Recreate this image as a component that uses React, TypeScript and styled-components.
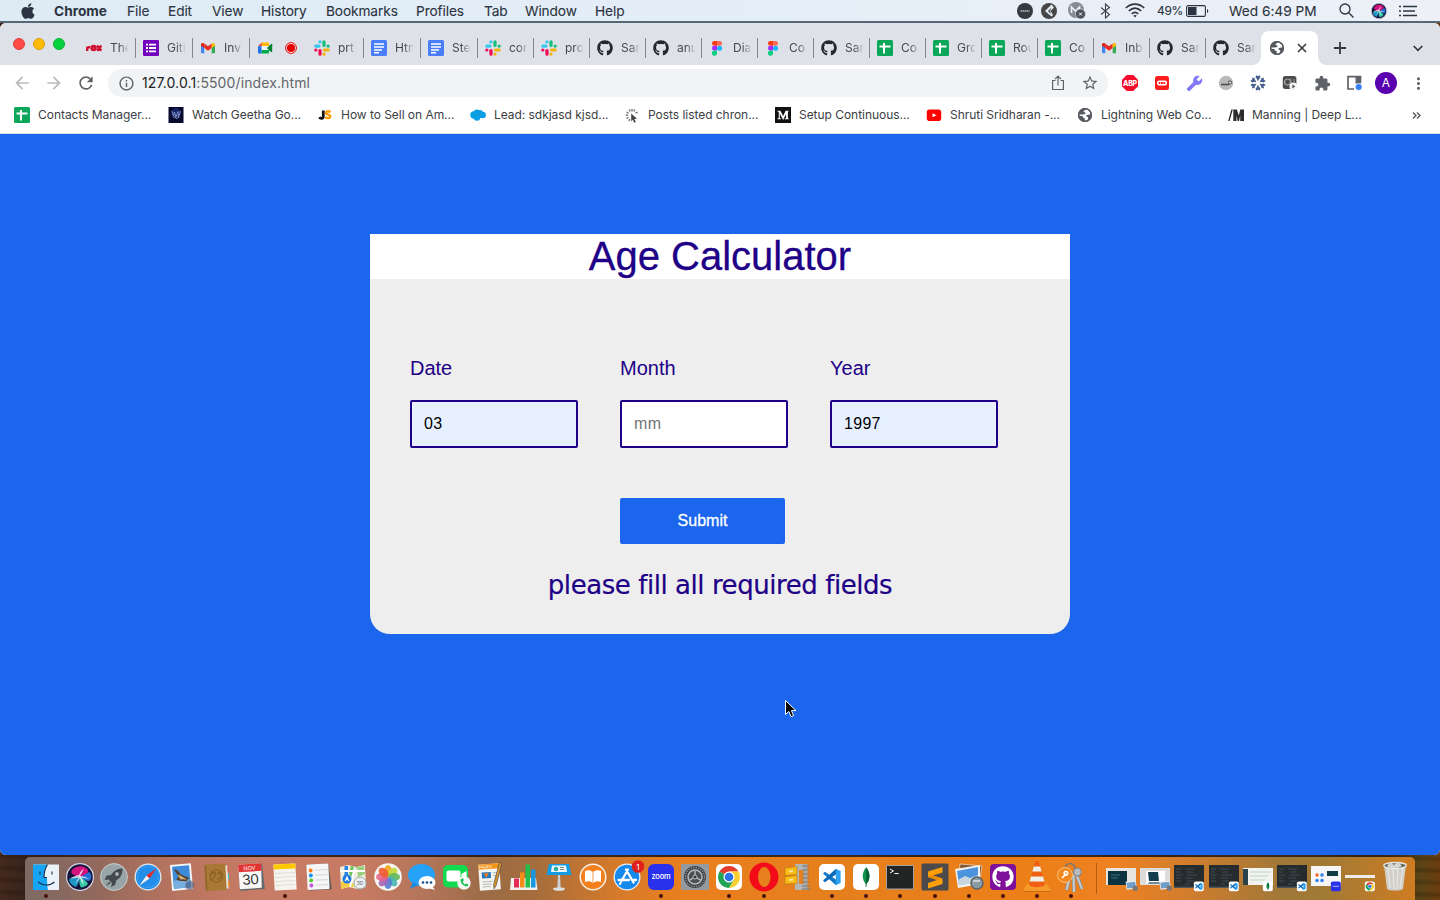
import React from "react";
import styled, { createGlobalStyle } from "styled-components";
import { FaApple, FaGithub } from "react-icons/fa";
import {
  MdArrowBack, MdArrowForward, MdBuild, MdExtension, MdInfoOutline,
  MdMoreVert, MdRefresh, MdStarBorder,
} from "react-icons/md";

const Global = createGlobalStyle`
  *, *::before, *::after { box-sizing: border-box; }
  body { margin: 0; background: #3a261b; overflow: hidden; }
`;

const ui = `Inter, "Liberation Sans", sans-serif`;
const indigo = "#200086";

const Desktop = styled.div`
  width: 1440px;
  height: 900px;
  display: flex;
  flex-direction: column;
  overflow: hidden;
  font-family: ${ui};
  background:
    repeating-linear-gradient(3deg, transparent 0 5px, rgba(0,0,0,.16) 7px 9px, transparent 12px),
    linear-gradient(90deg, #45291c 0, #38241c 25px, #3a2a18 1380px, #5a4417 1420px, #6d3d10 1440px);
`;

const MenuBar = styled.header`
  height: 23px;
  flex: none;
  display: flex;
  align-items: center;
  padding-left: 19px;
  padding-right: 18px;
  background: linear-gradient(90deg, #deebf5, #e4eef8 50%, #edf0f7);
  border-bottom: 2px solid #566878;
  color: #2b3440;
`;

const MenuText = styled.span<{ w: number; ls?: number; bold?: boolean; gap?: number; size?: number }>`
  width: ${(p) => p.w}px;
  margin-left: ${(p) => p.gap ?? 18}px;
  font-size: ${(p) => p.size ?? 13.7}px;
  line-height: 20px;
  font-weight: ${(p) => (p.bold ? 700 : 400)};
  letter-spacing: ${(p) => p.ls ?? -0.1}px;
  -webkit-text-stroke: ${(p) => (p.bold ? 0 : 0.1)}px;
  white-space: nowrap;
  flex: none;
`;

const Spring = styled.div`flex: 1;`;

const Slot = styled.span<{ w: number; color?: string }>`
  width: ${(p) => p.w}px;
  flex: none;
  display: flex;
  align-items: center;
  justify-content: center;
  color: ${(p) => p.color ?? "inherit"};
  svg { display: block; flex: none; }
`;

const BrowserWindow = styled.main`
  height: 832px;
  flex: none;
  display: flex;
  flex-direction: column;
  overflow: hidden;
  border-radius: 6px;
  background: #fff;
`;

const TabStrip = styled.div`
  height: 42px;
  flex: none;
  display: flex;
  align-items: flex-end;
  background: #dee1e8;
`;

const Lights = styled.div`
  width: 78px;
  height: 42px;
  padding: 15px 0 0 13px;
  display: flex;
  gap: 8px;
`;

const Light = styled.i<{ c: string; edge: string }>`
  width: 12px;
  height: 12px;
  border-radius: 50%;
  background: ${(p) => p.c};
  border: 0.5px solid ${(p) => p.edge};
`;

const Tab = styled.div<{ w: number; first: boolean; line: boolean }>`
  width: ${(p) => p.w}px;
  height: 34px;
  flex: none;
  display: flex;
  align-items: center;
  padding-left: ${(p) => (p.first ? 8 : 7)}px;
  gap: 8px;
  svg { display: block; flex: none; }
  &::after {
    content: "";
    width: 1px;
    height: 20px;
    margin-left: auto;
    background: ${(p) => (p.line ? "#83878d" : "transparent")};
  }
`;

const TabTitle = styled.span`
  width: 18px;
  margin-right: -9px;
  overflow: hidden;
  white-space: nowrap;
  font-size: 12px;
  line-height: 16px;
  color: #45494d;
  mask-image: linear-gradient(90deg, #000 50%, transparent 105%);
`;

const ActiveTab = styled.div`
  width: 57px;
  height: 34px;
  flex: none;
  display: flex;
  align-items: center;
  padding-left: 8px;
  gap: 11px;
  position: relative;
  border-radius: 8px 8px 0 0;
  background: #fff;
  color: #55595e;
  &::before, &::after {
    content: "";
    position: absolute;
    bottom: 0;
    width: 8px;
    height: 8px;
  }
  &::before { left: -8px; background: radial-gradient(circle at 0 0, transparent 7.5px, #fff 8px); }
  &::after { right: -8px; background: radial-gradient(circle at 100% 0, transparent 7.5px, #fff 8px); }
`;

const Toolbar = styled.div`
  height: 36px;
  flex: none;
  display: flex;
  align-items: center;
  padding-left: 6px;
  color: #5f6368;
`;

const AddressBar = styled.div`
  width: 1000px;
  height: 28px;
  margin-left: 6px;
  margin-right: 6px;
  border-radius: 14px;
  background: #f1f3f4;
  display: flex;
  align-items: center;
  padding-left: 2px;
  padding-right: 2px;
`;

const Url = styled.span`
  padding-bottom: 1px;
  font-size: 14px;
  letter-spacing: 0.11px;
  color: #63676c;
  white-space: nowrap;
  b { font-weight: 400; color: #202124; }
`;

const Avatar = styled.span`
  width: 22px;
  height: 22px;
  border-radius: 50%;
  background: #5b00ae;
  color: #fff;
  font-size: 12px;
  line-height: 22px;
  text-align: center;
`;

const Bookmarks = styled.nav`
  height: 33px;
  flex: none;
  display: flex;
  align-items: center;
  padding: 0 8px 4px 14px;
  border-bottom: 1px solid #dadce0;
`;

const Bookmark = styled.span<{ w: number }>`
  width: ${(p) => p.w}px;
  flex: none;
  display: flex;
  align-items: center;
  gap: 8px;
  font-size: 12px;
  line-height: 28px;
  letter-spacing: -0.04px;
  color: #3c4043;
  white-space: nowrap;
  svg { display: block; flex: none; }
`;

const Page = styled.section`
  flex: 1;
  padding-top: 100px;
  background: #1b66ec;
  font-family: "Liberation Sans", Arial, sans-serif;
`;

const Card = styled.div`
  width: 700px;
  height: 400px;
  margin: 0 auto;
  border-radius: 0 0 20px 20px;
  background: #eeeeee;
  color: ${indigo};
  display: flex;
  flex-direction: column;
`;

const Title = styled.h1`
  margin: 0;
  height: 45px;
  flex: none;
  background: #fff;
  font-size: 40px;
  font-weight: 400;
  line-height: 45px;
  text-align: center;
  -webkit-text-stroke: 0.3px ${indigo};
`;

const Fields = styled.div`
  display: grid;
  grid-template-columns: repeat(3, 168px);
  column-gap: 42px;
  padding: 77px 40px 0;
`;

const Field = styled.label`
  display: flex;
  flex-direction: column;
  gap: 20px;
  font-size: 20px;
  line-height: 24px;
`;

const Input = styled.input<{ $filled?: boolean }>`
  width: 168px;
  height: 48px;
  margin: 0;
  padding: 0 12px;
  border: 2px solid ${indigo};
  border-radius: 2px;
  outline: none;
  background: ${(p) => (p.$filled ? "#e6f0ff" : "#fff")};
  color: #000;
  font: 16px "Liberation Sans", Arial, sans-serif;
  letter-spacing: 0.3px;
  &::placeholder { color: #757575; }
`;

const Submit = styled.button`
  width: 165px;
  height: 46px;
  margin: 50px 0 0 250px;
  padding: 0;
  border: 0;
  border-radius: 2px;
  background: #1b66ec;
  color: #fff;
  font: 16px "Liberation Sans", Arial, sans-serif;
  -webkit-text-stroke: 0.3px #fff;
`;

const Message = styled.p`
  margin: 25px 0 0;
  font: 26px/32px "DejaVu Sans", Verdana, sans-serif;
  letter-spacing: -0.44px;
  text-align: center;
  white-space: nowrap;
  -webkit-text-stroke: 0.2px ${indigo};
`;

const Cursor = styled.svg`
  position: absolute;
  left: 784px;
  top: 699px;
`;

const DockArea = styled.footer`
  height: 45px;
  flex: none;
  padding: 2px 25px 0;
`;

const Dock = styled.div`
  height: 43px;
  display: flex;
  padding-left: 3.6px;
  border-radius: 5px 5px 0 0;
  background: linear-gradient(90deg, #7e6a63 0, #91695d 70px, #b4735f 140px, #c87b66 230px, #c87b63 330px,
    #b3755a 400px, #9b6c46 460px, #a56d3c 510px, #d57a2b 590px, #ea7f1d 660px, #e57f1e 820px, #ed7f17 1000px,
    #ee8122 1090px, #d27d2d 1160px, #9f7838 1260px, #a17a34 1300px, #cf7c22 1390px);
`;

const DockCell = styled.div<{ $on?: boolean }>`
  width: 34.2px;
  height: 43px;
  flex: none;
  padding-top: 6px;
  display: flex;
  flex-direction: column;
  align-items: center;
  svg { display: block; flex: none; overflow: visible; }
  &::after {
    content: "";
    width: 4px;
    height: 4px;
    margin-top: 3px;
    border-radius: 50%;
    background: ${(p) => (p.$on ? "#46120a" : "transparent")};
  }
`;

const DockDivider = styled.i`
  width: 1px;
  height: 31px;
  margin: 6px 7px 0 7.5px;
  background: #b85c10;
`;

/* ---------- small site icons, drawn on a 16 unit grid ---------- */

const Svg = ({ s = 16, v = 16, children }: { s?: number; v?: number; children: React.ReactNode }) => (
  <svg width={s} height={s} viewBox={`0 0 ${v} ${v}`} fill="none">{children}</svg>
);

const Rox = () => (
  <Svg><g stroke="#cf1030" strokeWidth="2.4"><path d="M1.2 11V6.8M1.5 7.2H4.2M11 5.6l4.4 5M15.4 5.6l-4.4 5" /><circle cx="7.6" cy="8" r="1.8" strokeWidth="2.8" /></g></Svg>
);
const Forms = () => (
  <Svg><rect width="16" height="16" rx="1.2" fill="#7200bd" /><path d="M3 4.700h2M6 4.700h7M3 8h2M6 8h7M3 11.300h2M6 11.300h7" stroke="#fff" strokeWidth="1.800" /></Svg>
);
const Gmail = () => (
  <Svg><path d="M1 5v7.500c0 .500.300.800.800.800H4.300V7z" fill="#4285f4" /><path d="M15 5v7.500c0 .500-.300.800-.800.800h-2.500V7z" fill="#34a853" /><path d="M4.300 3.500L8 6.300l3.700-2.800V8L8 10.800 4.300 8z" fill="#ea2c22" /><path d="M11.700 3.500c1.500-1.200 3.300-.500 3.300 1v1.200L11.700 8z" fill="#fbbc04" /><path d="M4.300 3.500C2.800 2.300 1 3 1 4.500v1.200L4.300 8z" fill="#d9231b" /></Svg>
);
const Meet = () => (
  <Svg><path d="M4.700 2.500H11c.600 0 1 .400 1 1V6H4.700z" fill="#ffba00" /><path d="M4.700 2.500V6.200H1z" fill="#ea4335" /><path d="M1 6.200h3.700v7.300H2a1 1 0 0 1-1-1z" fill="#1a73e8" /><path d="M4.700 10H12v2.500a1 1 0 0 1-1 1H4.700z" fill="#00ac47" /><path d="M12 5.800l2.300-1.900c.400-.300.900 0 .900.400v7.400c0 .500-.500.700-.900.400L12 10.200 9.700 8z" fill="#00832d" /><path d="M4.700 6H12l-2.500 2.200L12 10H4.700z" fill="#f0f4fa" /></Svg>
);
const Slack = () => (
  <Svg><g strokeLinecap="round" strokeWidth="3.200"><path d="M1.800 6.100H5M6 1.800v.100" stroke="#36c5f0" /><path d="M10 1.800V5.500M14.200 6.100h-.100" stroke="#16bf7c" /><path d="M14.200 10H10.500M10 14.200v-.100" stroke="#f5b20c" /><path d="M6 14.200V10.500M1.800 10h.100" stroke="#ee0b54" /></g></Svg>
);
const Docs = () => (
  <Svg><rect width="16" height="16" rx="1.500" fill="#4a7df8" /><path d="M3 4h10M3 7h10M3 10h8M3 12.800h5" stroke="#fff" strokeWidth="1.500" /></Svg>
);
const Sheet = () => (
  <Svg><rect width="16" height="16" rx="1.500" fill="#0aa65a" /><path d="M2.500 6.500h11M7 3v10.500" stroke="#fff" strokeWidth="2" /></Svg>
);
const Figma = () => (
  <Svg><path d="M8 1H5.400a2.400 2.400 0 0 0 0 4.800H8z" fill="#fb3b12" /><path d="M8 1h2.700a2.400 2.400 0 0 1 0 4.800H8z" fill="#ff6b5a" /><path d="M8 5.800H5.400a2.400 2.400 0 0 0 0 4.800H8z" fill="#a32cff" /><circle cx="10.600" cy="8.200" r="2.500" fill="#0fb4ff" /><path d="M5.400 10.600H8v2.500a2.550 2.550 0 1 1-2.600-2.500z" fill="#0acf83" /></Svg>
);
const Globe = () => (
  <Svg><circle cx="8" cy="8" r="7" fill="#55595e" /><path d="M9.500 2.200c-.500.800-3 .800-3 2.400 0 1 2 .600 2 1.600 0 1.200-1.800 1-2.700 1.200H2.300L2.200 8.700l3 .300c.900.500.500 1.700 1.600 1.900l.900.200v2.500c2.600.100 3.700-1.600 3.500-2.900-.200-1-2.100-1.100-1.800-2.200.400-1.200 2.600-1 4-1.100.200-2-1.400-4.300-3.900-5.200z" fill="#fff" /><circle cx="8" cy="8" r="6.400" stroke="#55595e" strokeWidth="1.300" /></Svg>
);
const Record = () => (
  <Svg s={12} v={12}><circle cx="6" cy="6" r="5.400" fill="#fff" stroke="#e00000" strokeWidth="1" /><circle cx="6" cy="6" r="4.100" fill="#e80000" /></Svg>
);
const Geetha = () => (
  <Svg><rect x=".500" width="15" height="16" fill="#070a2c" /><circle cx="8" cy="6" r="5" fill="#2743a8" opacity=".45" /><path d="M4 4l1.500 5 1-4 1.500 5 2-5.500 .500 6L12.500 4M5 11l2-1.500 1.500 2.500 2-2" stroke="#93a2d8" strokeWidth=".8" /></Svg>
);
const Js = () => (
  <Svg><path d="M6.300 3.500v6.300c0 2-3 2-4 .500" stroke="#111" strokeWidth="2.700" /><path d="M13.500 5C11 3.500 8.700 4.500 9 6.200c.200 1.800 4.400 1 4.300 3.200-.100 2-3 2.300-5.100.900" stroke="#ff9900" strokeWidth="2.400" /></Svg>
);
const Salesforce = () => (
  <Svg><g fill="#0b9ee2"><circle cx="4" cy="8" r="3.700" /><circle cx="7" cy="5.600" r="3.200" /><circle cx="10" cy="6" r="3" /><circle cx="12.700" cy="8" r="3.200" /><circle cx="7" cy="10.500" r="3.200" /><path d="M4 6h9v5H4z" /></g></Svg>
);
const Posts = () => (
  <Svg><path d="M8 2v2.500M10.800 2.500l-.900 2M13.500 5l-2 1.200M5.200 2.500l.900 2M2.500 5l2 1.200M1.700 8.200h2.500M2.600 11.500l1.900-1.300M5 14l.700-2" stroke="#666" strokeWidth="1.300" /><path d="M7.200 6.500l5.800 5.300-2.700.100 1.600 3-1.500.800-1.600-3L7.200 14.500z" fill="#444" /></Svg>
);
const Medium = () => (
  <Svg><rect width="16" height="16" fill="#111" /><path d="M2.500 4.200h3M10.600 4.200h3M4.300 4.500v7M2.500 11.800h3.200M12 4.500v7M9.800 11.800h3.800" stroke="#fff" strokeWidth="1.100" /><path d="M4.800 4.500L8.100 11l3.200-6.500M12 4.500v7" stroke="#fff" strokeWidth="1.700" /></Svg>
);
const YouTube = () => (
  <Svg><rect x=".800" y="2.500" width="14.400" height="11.500" rx="2.800" fill="#f00" /><path d="M6.500 6.200l4 2-4 2z" fill="#fff" /></Svg>
);
const Manning = () => (
  <Svg><path d="M3.300 2.500h1.500L1.600 14H.200zM5.300 2.500h3.600l1.900 6 1.500-6H16V14h-3.800V8.500L11 14H9.700L8.500 8.500V14H5.300z" fill="#2c2c2c" /></Svg>
);
const Siri = ({ s = 16 }: { s?: number }) => (
  <Svg s={s} v={28}>
    <circle cx="14" cy="14" r="13.400" fill="#15123c" stroke="#d4d6e4" strokeWidth="1.200" />
    <path d="M14 14C5 12 4 9 6.500 6.500 11 2 19 2 22 7c1 3-3 5-8 7z" fill="#d4157f" />
    <path d="M14 14c4-1 8-5 9.500-5 3 4 2 8-.500 9-3 0-6-2-9-4z" fill="#2474d8" />
    <path d="M14 14C9 15 4 14 3 17c1 4 4 6 7 7 2-2 3-6 4-10z" fill="#1d96c4" />
    <path d="M14 14c-1 4-1 8 1 10.500 4-.500 6-2 7-4-2-3-5-5-8-6.500z" fill="#35c9a8" />
    <path d="M14 12.500c2-2 3-5 3.500-7-2 2-3.500 4-4.500 6.500-3 .500-7 2-9 3.500 4-.500 7-.800 9-1L9 21c2-2 4-4 5-6l3.500 7c0-3-.700-5-2-7.500l8 1.500c-3-1.500-6-2.700-8.500-3z" fill="#fff" opacity=".8" />
  </Svg>
);

const Code = () => (
  <><path d="M4.500 7L2 9.200l16.500 15 1.500.300V18z" fill="#1177c8" /><path d="M4.500 21L2 18.800l16.500-15L20 3.500V10z" fill="#0a69ba" /><path d="M19 3l6.500 3v16L19 25z" fill="#2ba0f0" /></>
);
const Leaf = () => (
  <><path d="M14 3c5.500 7 4.500 14 0 19C9.500 17 8.500 10 14 3z" fill="#13924c" /><path d="M14 3c5.500 7 4.500 14 0 19z" fill="#076234" /><path d="M14 19v6" stroke="#0a6b37" /></>
);
const ChromeMark = () => (
  <><path d="M14 14L4.500 8.500A11 11 0 0 1 23.500 8.500H14z" fill="#e33b2e" /><path d="M14 14L4.500 8.500A11 11 0 0 0 14 25l5-8z" fill="#23a455" /><path d="M14 8.500h9.500A11 11 0 0 1 14 25l5-8z" fill="#fdd02f" /><circle cx="14" cy="14" r="5.500" fill="#fff" /><circle cx="14" cy="14" r="4.300" fill="#2b73e8" /></>
);

/* ---------- dock artwork, drawn on a 28 unit grid ---------- */

const Tile = ({ fill }: { fill: string }) => <rect x="1" y="1" width="26" height="26" rx="5" fill={fill} />;

const dockApps: { on?: boolean; art: React.ReactNode }[] = [
  { on: true, art: <><path d="M1 1.500h26V27H1z" fill="#eaf1f8" /><path d="M1 1.500h14.500c-3 5-3.500 9-3.500 13H15c0 5 .300 9 1 12.500H1z" fill="#16a5f5" /><path d="M8 8.500v3M20 8.500v3M6 19c5 4 12 4 16.500 0M15.500 1.500c-3 5-3.500 9-3.500 13H15" stroke="#183046" strokeWidth="1.100" /></> },
  { art: <Siri s={28} /> },
  { art: <><circle cx="14" cy="14" r="13.400" fill="#99a4a6" stroke="#c8ced0" /><path d="M22.500 5.500c-6 0-9 3-11.500 6.500l-4.500.800L4.500 17l4-.500 3.500 3.500-1 4 4-2 1.500-5c4-2 6-6 6-11.500z" fill="#42484b" /><circle cx="17" cy="11" r="1.900" fill="#aab1b3" /><path d="M5.500 23l4-4.500 1.200 1.500z" fill="#42484b" /></> },
  { art: <><circle cx="14" cy="14" r="13.500" fill="#e3e7ea" /><circle cx="14" cy="14" r="12.200" fill="#238ee9" /><circle cx="14" cy="14" r="10.500" stroke="#7cc0f3" strokeWidth=".8" strokeDasharray=".8 1.500" /><path d="M22.500 5.500L15.500 15.500 12.500 12.500z" fill="#ed2725" /><path d="M5.500 22.500L12.500 12.500l3 3z" fill="#f4f4f4" /></> },
  { art: <g transform="rotate(-5 14 14)"><path d="M3 1h21v26H3z" fill="#f1f3f4" /><path d="M5 3h17v22H5z" fill="#3d8bd8" /><path d="M5 17h17v8H5z" fill="#78aede" /><path d="M6.500 5.500c4 1 5.500 4 6.500 6l8 4-3 3-7-1-3-2 3-2z" fill="#5a3c24" /><path d="M10 11l9 6-7-1z" fill="#d5b47a" /><circle cx="21" cy="23" r="4.500" fill="#37466c" stroke="#778" opacity=".55" /></g> },
  { art: <g transform="rotate(-3 14 14)"><path d="M22 3h3v23h-3z" fill="#e6e6df" /><path d="M25 4h1v6h-1z" fill="#e54" /><path d="M25 11h1v6h-1z" fill="#3cc" /><path d="M25 19h1v5h-1z" fill="#f90" /><rect x="2" y="1" width="21" height="26.500" rx="1.500" fill="#a87835" /><path d="M3 2v25" stroke="#8d6425" strokeWidth="1.500" /><circle cx="13.500" cy="13" r="6.300" stroke="#8a5f26" /><path d="M9.500 16.500c.500-2 3-2 3-5.500 0-3-3.500-2-3 .500M14.500 16.500c2.500-1 3.500-2 3.500-5 0-3-3.500-2-3 .500" stroke="#8a5f26" strokeWidth="1.200" /></g> },
  { art: <g transform="rotate(-4 14 14)"><path d="M2 1h24l1 26H2z" fill="#656969" /><path d="M2 1h23l-1 24.500H2z" fill="#f8f8f8" /><path d="M2 1h23v7.500H2z" fill="#e33434" /><text x="13" y="7" fontSize="5.500" fill="#fff" textAnchor="middle" fontFamily="Inter">NOV</text><text x="13.200" y="21.500" fontSize="14" fill="#333" textAnchor="middle" fontFamily="Inter" letterSpacing="-.6">30</text></g> },
  { on: true, art: <g transform="rotate(-3 14 14)"><path d="M3 1h22v26H3z" fill="#f6f5ed" /><path d="M3 1h22v5H3z" fill="#ffc900" /><path d="M4 10h20M4 14h20M4 18h20M4 22h20" stroke="#deded9" /></g> },
  { art: <g transform="rotate(-3 14 14)"><path d="M3 1h21l2 26H4z" fill="#555" /><rect x="2" y="1" width="22" height="25.500" rx="1" fill="#f6f6f6" /><circle cx="6" cy="7" r="2" fill="#ff7b17" /><circle cx="6" cy="12" r="2" fill="#1492ef" /><circle cx="6" cy="17" r="2" fill="#52c936" /><circle cx="6" cy="22" r="2" fill="#c651dd" /><path d="M10 7h13M10 12h13M10 17h13M10 22h13" stroke="#c9c9c9" strokeWidth=".7" /></g> },
  { art: <><path d="M1 4l8-2 8 2 9-2 1 22-9 2-8-2-8 2z" fill="#f1eedc" /><path d="M12 3l6 1-6 10-2-4z" fill="#6cc25b" /><path d="M18 4l7-1 1 8-7 3z" fill="#9bd17c" /><path d="M2 19l8-4 6 9-6 0-8 2z" fill="#f5cb46" /><path d="M5.500 3h3.500v12H5.500z" fill="#2385e6" /><path d="M1 8h25M16 4l-5 20" stroke="#fff" strokeWidth="2" /><circle cx="8" cy="16" r="4.500" fill="#2079df" /><path d="M8 12.500l2.500 6L8 17l-2.500 1.500z" fill="#fff" /><circle cx="21" cy="20" r="6" fill="#eceff0" stroke="#9aa" /><text x="21" y="22" fontSize="5" textAnchor="middle" fontFamily="Inter" fill="#667">3D</text></> },
  { art: <><circle cx="14" cy="14" r="13.800" fill="#f5f5f1" />{["#f7a31c", "#c7d63b", "#62b75a", "#48b5b5", "#577bd3", "#a765b8", "#e46687", "#ee5b31"].map((c, i) => <ellipse key={c} cx="14" cy="7.800" rx="3.900" ry="5.800" fill={c} opacity=".9" transform={`rotate(${i * 45} 14 14)`} />)}</> },
  { art: <><ellipse cx="13.500" cy="12" rx="13.500" ry="11" fill="#25a2f7" /><path d="M5 19l-3 7 8-4z" fill="#168be4" /><ellipse cx="19" cy="19.500" rx="8.500" ry="6.500" fill="#fff" /><path d="M24 23l3 4-7-2z" fill="#fff" /><g fill="#12508c"><circle cx="15" cy="19.500" r="1.300" /><circle cx="19" cy="19.500" r="1.300" /><circle cx="23" cy="19.500" r="1.300" /></g></> },
  { art: <><rect x="1" y="2" width="25" height="22.500" rx="5" fill="#12da51" /><rect x="4.500" y="7.500" width="14" height="11" rx="2" fill="#fff" /><path d="M19.500 11l5-3v9l-5-3z" fill="#fff" /><circle cx="22" cy="20" r="6.700" fill="#f6f7f4" /><path d="M18.500 16.500c0 4 3 7 7 7l1-2-2.500-1-1.200 1c-1-1-2-2-2-3l1-1-.800-2.500z" fill="#19c553" /></> },
  { art: <g transform="rotate(-4 14 14)"><path d="M3 1h21v26H3z" fill="#f4f4f2" /><path d="M3 1h21v5H3z" fill="#f49418" /><text x="10" y="5" fontSize="4" fill="#fff" textAnchor="middle" fontFamily="Inter">PAGES</text><path d="M6 9h9v6H6z" fill="#2878b8" /><path d="M8 10h5l-2.500 4.500z" fill="#f37b21" /><path d="M17 10h4M17 13h4M6 18.500h10M6 21h9M6 23.500h8" stroke="#aaa" strokeWidth=".8" /><path d="M24.500 0l2.500 1-7.500 22-2.200 3-.300-4z" fill="#d5932d" stroke="#424242" strokeWidth=".6" /></g> },
  { art: <><path d="M1 15h25l1.500 12H0z" fill="#f0f0ef" /><path d="M4 15.500h5v9H4z" fill="#e62a56" /><path d="M10 9.500h4.500v15H10z" fill="#f48e19" /><path d="M15.500 1.500h4.500v23h-4.500z" fill="#24bf4b" /><path d="M21 6.500h4.500v18H21z" fill="#1997dd" /></> },
  { art: <><path d="M4 1h20l2.500 11h-25z" fill="#139ce2" /><path d="M7 2.500h14l1 6.500H6z" fill="#eef5f7" /><circle cx="11" cy="6" r="2.300" fill="#29ad9d" /><path d="M15 4.500h4M15 6.500h4" stroke="#888" /><path d="M13 12h2l.700 14h-3.400z" fill="#cdd1d3" /><ellipse cx="14" cy="26" rx="6" ry="1.800" fill="#dce1e4" /></> },
  { art: <><circle cx="14" cy="14" r="13.500" fill="#f7f0e5" /><circle cx="14" cy="14" r="12" fill="#f4801d" /><path d="M14 9c-3-2-5-2-8-1v11c3-1 5-1 8 1 3-2 5-2 8-1V8c-3-1-5-1-8 1z" fill="#fff" /><path d="M14 9v11" stroke="#f39a4c" /></> },
  { art: <><circle cx="14" cy="14" r="13.500" fill="#e8eef5" /><circle cx="14" cy="14" r="12.200" fill="#1689ed" /><path d="M15 6.500L8.500 18M13 6.500L20.500 19.500M5.500 17h10.500M19.500 17h3.500M7.500 20l-.500.800" stroke="#fff" strokeWidth="2.300" strokeLinecap="round" /><circle cx="25" cy="3.500" r="6.300" fill="#df201b" /><text x="25" y="6.500" fontSize="8" fill="#fff" textAnchor="middle" fontFamily="Inter">1</text></> },
  { on: true, art: <><rect x="1" y="1" width="26" height="26" rx="6" fill="#2931ec" /><text x="14" y="16" fontSize="7.500" fontWeight="500" fill="#fff" textAnchor="middle" fontFamily="Inter" letterSpacing="-.2">zoom</text></> },
  { art: <><rect y="1" width="28" height="26" rx="1" fill="#939b9f" /><circle cx="14" cy="14" r="11" fill="#3a3d40" /><circle cx="14" cy="14" r="9.500" stroke="#85898c" strokeWidth="1.500" strokeDasharray="1.500 1" /><circle cx="14" cy="14" r="7" fill="#4b4f52" stroke="#b9bcbe" strokeWidth="1.500" /><path d="M14 14V7.500M14 14l-5.500 3.200M14 14l5.500 3.200" stroke="#b9bcbe" strokeWidth="1.400" /><circle cx="14" cy="14" r="2" fill="#33373a" stroke="#b9bcbe" /></> },
  { on: true, art: <><Tile fill="#fff" /><ChromeMark /></> },
  { on: true, art: <path d="M14-.500C6-.500-.500 6-.500 14S6 28.500 14 28.500 28.500 22 28.500 14 22-.500 14-.500zM14.300 4c3.400 0 6.200 4.500 6.200 10s-2.800 10-6.200 10S8.100 19.500 8.100 14 10.900 4 14.300 4z" fillRule="evenodd" fill="#f20b18" /> },
  { art: <><path d="M11 1h9v6h-5v14h5v6h-9z" fill="#b3b6b6" /><path d="M19.500 1h4v26h-4z" fill="#a7aaa9" /><path d="M18 3h7M18 7h7M18 11h7M18 15h7M18 19h7M18 23h8M18 26h9" stroke="#7b7d7b" strokeWidth="1.200" /><path d="M1 5l12-1.500v8L1 12.500zM1 13.500l12-1v8L1 21z" fill="#f8bd16" stroke="#bd7b12" strokeWidth=".7" /><path d="M5 7.500l4-.500v2l-4 .500zM5 16l4-.500v2l-4 .500z" fill="#f8e499" /></> },
  { on: true, art: <><Tile fill="#fff" /><g transform="translate(3.500 3.500) scale(.75)"><Code /></g></> },
  { on: true, art: <><Tile fill="#fff" /><g transform="translate(1.500 1.500) scale(.9)"><Leaf /></g></> },
  { on: true, art: <><rect y="2" width="28" height="24.500" rx="1" fill="#a3a3a3" /><path d="M1 3h26v22.500H1z" fill="#232525" /><path d="M4 6l3.500 2L4 10M8.500 10.500h4" stroke="#fff" /></> },
  { on: true, art: <><rect x=".500" y=".500" width="27" height="27" rx="1.500" fill="#4a4a4a" /><path d="M21.500 4v5.500L12 12.500l9.500 3V21L7 25.500V20l9-3-9-3V8.500z" fill="#ff9d0a" /><path d="M7 14l9 3 5.500-1.500-9.500-3z" fill="#e98a08" /></> },
  { on: true, art: <><path d="M5 1l22 2-3 20-21-2z" fill="#85542e" stroke="#e8e3d8" strokeWidth=".7" /><path d="M0 6l25-4v19L3 25z" fill="#f2f2f0" /><path d="M2 8l21-4v15L4 22z" fill="#4b94dd" /><path d="M3 17l7-4 5 2 8-3v8L4 22z" fill="#c8d6e0" /><circle cx="22" cy="20" r="6" fill="#8c9aa3" stroke="#5a646a" strokeWidth="1.500" /><path d="M18 18h7" stroke="#dfe6ea" strokeWidth="1.500" /></> },
  { on: true, art: <><rect x="1" y="1" width="26" height="26" rx="4" fill="#7e109a" /><g transform="translate(3 3)"><FaGithub size={22} color="#fff" /></g></> },
  { on: true, art: <><path d="M4 21h20l4 7H0z" fill="#f79a2c" /><path d="M0 28h28v1H0z" fill="#c96d12" /><path d="M12.300-2h3.400L22 22c-4 3-12 3-16 0z" fill="#ef5f14" /><path d="M10.800 3.500h6.400l1.400 5H9.400zM8 13.500h12l1.400 5H6.600z" fill="#efeee9" /></> },
  { on: true, art: <><circle cx="13" cy="5.500" r="5" stroke="#777" strokeWidth="1.500" /><path d="M12 17l-2.500 10M16.500 12l.500 17M20 13l5 13" stroke="#8b8f90" strokeWidth="3.600" /><path d="M12 17l-2.500 10M16.500 12l.500 17M20 13l5 13" stroke="#c9cccd" strokeWidth="2" /><circle cx="20.500" cy="9" r="4" fill="#b9bcbd" stroke="#7c8081" /><circle cx="8" cy="12" r="7.500" fill="#f08a20" stroke="#f8c27e" /><path d="M5 15l4-4M9 8.500a1.800 1.800 0 1 1-.100 0" stroke="#fff" strokeWidth="1.600" /></> },
];

type Mini = "preview" | "code" | "leaf" | "zoom" | "chrome";
const MiniBadge = ({ kind }: { kind: Mini }) => (
  <g transform="translate(19.500 15) scale(.38)">
    {kind === "preview" ? <g transform="rotate(-7)"><path d="M0 2h27v21H0z" fill="#eee" /><path d="M2 5h23v15H2z" fill="#6f9fc9" /><circle cx="23" cy="22" r="7" fill="#777" /></g>
      : <Tile fill={kind === "zoom" ? "#2931ec" : "#fff"} />}
    {kind === "code" && <g transform="translate(2 2) scale(.86)"><Code /></g>}
    {kind === "leaf" && <Leaf />}
    {kind === "chrome" && <ChromeMark />}
    {kind === "zoom" && <path d="M6 14h16" stroke="#9faaff" strokeWidth="3" />}
  </g>
);

const DarkEditor = () => (
  <><path d="M0-1h30v22.500H0z" fill="#262b2e" /><path d="M2 3h5M2 6h4M2 9h6M2 12h4M2 15h5M11 3h9M13 6h6M13 9h10M11 12h8M13 15h7M11 18h5" stroke="#526168" strokeWidth=".6" /><path d="M0 21h30" stroke="#35566a" /></>
);

const thumbs: { kind: Mini; art: React.ReactNode }[] = [
  { kind: "preview", art: <><path d="M0 2h30v17H0z" fill="#e8e5e1" /><path d="M2 5h19v14H2z" fill="#0d3340" /><path d="M5 9h9M5 12h7" stroke="#367078" /></> },
  { kind: "preview", art: <><path d="M0 2h30v17H0z" fill="#dedcd8" /><path d="M6 5h19v13H6z" fill="#fff" /><path d="M8 6h10l1 9H9z" fill="#153f50" /><path d="M9 16h10l2 2H8z" fill="#738b92" /></> },
  { kind: "code", art: <DarkEditor /> },
  { kind: "code", art: <DarkEditor /> },
  { kind: "leaf", art: <><path d="M0 2h30v17H0z" fill="#f2f3f0" /><path d="M0 3h5v16H0z" fill="#29434d" /><path d="M7 6h21M7 10h18M7 14h15" stroke="#b9d5c4" /></> },
  { kind: "code", art: <DarkEditor /> },
  { kind: "zoom", art: <><path d="M0 0h30v20H0z" fill="#f6f6f6" /><path d="M16 5h11v5H16z" fill="#113c43" /><circle cx="6" cy="9" r="1.800" fill="#f26b32" /><circle cx="11" cy="9" r="1.800" fill="#3584ed" /><circle cx="6" cy="14.500" r="1.800" fill="#3584ed" /><circle cx="11" cy="14.500" r="1.800" fill="#3584ed" /></> },
  { kind: "chrome", art: <path d="M0 9h30v3H0z" fill="#eeece8" /> },
];

const hub = <FaGithub size={16} color="#24292e" />;
const tabs: [React.ReactNode, React.ReactNode, number][] = [
  [<Rox />, "The", 58], [<Forms />, "GitH", 57], [<Gmail />, "Invit", 57], [<Meet />, <Record />, 57], [<Slack />, "prt", 57],
  [<Docs />, "Htm", 57], [<Docs />, "Step", 57], [<Slack />, "com", 56], [<Slack />, "proj", 56], [hub, "San", 56], [hub, "anu", 56],
  [<Figma />, "Dia", 56], [<Figma />, "Co", 56], [hub, "San", 56], [<Sheet />, "Co", 56], [<Sheet />, "Gro", 56], [<Sheet />, "Rou", 56],
  [<Sheet />, "Co", 56], [<Gmail />, "Inb", 56], [hub, "San", 56], [hub, "San", 55],
];

const bookmarks: [React.ReactNode, string, number][] = [
  [<Sheet />, "Contacts Manager...", 154], [<Geetha />, "Watch Geetha Go...", 149],
  [<Js />, "How to Sell on Am...", 153], [<Salesforce />, "Lead: sdkjasd kjsd...", 154],
  [<Posts />, "Posts listed chron...", 151], [<Medium />, "Setup Continuous...", 151],
  [<YouTube />, "Shruti Sridharan -...", 151], [<Globe />, "Lightning Web Co...", 151],
  [<Manning />, "Manning | Deep L...", 151],
];

const menus: [string, number][] = [
  ["File", 23], ["Edit", 26], ["View", 31], ["History", 47], ["Bookmarks", 72], ["Profiles", 50], ["Tab", 23], ["Window", 52], ["Help", 30],
];

export default function App() {
  return (
    <>
      <Global />
      <Desktop>
        <MenuBar>
          <Slot w={17}><FaApple size={18} /></Slot>
          <MenuText w={55} bold ls={0}>Chrome</MenuText>
          {menus.map(([t, w]) => <MenuText key={t} w={w}>{t}</MenuText>)}
          <Spring />
          <Slot w={24}><Svg><circle cx="8" cy="8" r="8" fill="#343a40" /><path d="M3.500 8h9" stroke="#aeb6bd" strokeWidth="1.400" strokeDasharray="1.700 .400" /></Svg></Slot>
          <Slot w={24}><Svg><circle cx="8" cy="8" r="8" fill="#47474a" /><path d="M10.500 1.500L4 8l6.500 5.500 1.500-1.500-2.500-4L13 4.500z" fill="#e8eff6" /><path d="M10.500 4.500L7 8l3 3-1-3z" fill="#47474a" /></Svg></Slot>
          <Slot w={30}><Svg s={19} v={19}><circle cx="9" cy="9" r="8" fill="#858b91" /><path d="M4.500 12V6l4 4 4-4v3" stroke="#e8eff6" strokeWidth="1.700" /><circle cx="13.500" cy="13" r="5" fill="#4a5158" stroke="#e8eff6" strokeWidth=".6" /><path d="M12 11.500l3 3M15 11.500l-3 3" stroke="#fff" /></Svg></Slot>
          <Slot w={28}><svg width="11" height="16" viewBox="0 0 11 16" fill="none" stroke="#3a424c" strokeWidth="1.100"><path d="M1 4.500l8.500 7L5.500 15V1l4 3.500-8.500 7" /></svg></Slot>
          <Slot w={32}><svg width="20" height="15" viewBox="0 0 20 15" fill="none" stroke="#2b3440" strokeWidth="1.700"><path d="M.800 5C6-.300 14-.300 19.200 5M3.800 8C8 4 12 4 16.200 8M6.800 10.800c2.200-2 4.200-2 6.400 0" /><path d="M8.300 12.500L10 14.500l1.700-2c-1-.800-2.400-.800-3.400 0z" fill="#2b3440" stroke="none" /></svg></Slot>
          <MenuText w={29} gap={6} size={12} ls={-0.35}>49%</MenuText>
          <Slot w={23}><svg width="23" height="12" viewBox="0 0 23 12" fill="none"><rect x=".600" y=".600" width="18.800" height="10.800" rx="1.500" stroke="#2b3440" strokeWidth="1.100" /><path d="M2 2h8.500v8H2z" fill="#2b3440" /><path d="M21 4c1.600.400 1.600 3.600 0 4z" fill="#2b3440" /></svg></Slot>
          <MenuText w={99} gap={20} ls={-0.02}>Wed 6:49 PM</MenuText>
          <Slot w={36}><svg width="15" height="15" viewBox="0 0 15 15" fill="none" stroke="#2b3440" strokeWidth="1.300"><circle cx="6" cy="6" r="5" /><path d="M9.700 9.700l4.800 4.800" /></svg></Slot>
          <Slot w={30}><Siri /></Slot>
          <Slot w={28}><svg width="19" height="12" viewBox="0 0 19 12" stroke="#2b3440" strokeWidth="1.700"><path d="M0 1.500h2M4 1.500h14M0 6h2M4 6h12M0 10.500h2M4 10.500h14" /></svg></Slot>
        </MenuBar>

        <BrowserWindow>
          <TabStrip>
            <Lights>
              <Light c="#ff4a45" edge="#e03c38" /><Light c="#fdba08" edge="#dfa000" /><Light c="#08d13e" edge="#04b233" />
            </Lights>
            {tabs.map(([icon, title, w], i) => (
              <Tab key={i} w={w} first={i === 0} line={i < tabs.length - 1}>
                {icon}
                {typeof title === "string" ? <TabTitle>{title}</TabTitle> : <Slot w={20}>{title}</Slot>}
              </Tab>
            ))}
            <ActiveTab>
              <Globe />
              <svg width="12" height="12" viewBox="0 0 12 12" stroke="#35383c" strokeWidth="1.600"><path d="M2 2l8 8M10 2l-8 8" /></svg>
            </ActiveTab>
            <Slot w={44}><svg width="12" height="34" viewBox="0 0 12 34" stroke="#35383c" strokeWidth="1.800"><path d="M0 17h12M6 11v12" /></svg></Slot>
            <Spring />
            <Slot w={44}><svg width="10" height="34" viewBox="0 0 10 34" fill="none" stroke="#35383c" strokeWidth="1.700"><path d="M.700 15L5 19.300 9.300 15" /></svg></Slot>
          </TabStrip>

          <Toolbar>
            <Slot w={32} color="#b8babd"><MdArrowBack size={20} /></Slot>
            <Slot w={32} color="#b8babd"><MdArrowForward size={20} /></Slot>
            <Slot w={32}><MdRefresh size={20} /></Slot>
            <AddressBar>
              <Slot w={32}><MdInfoOutline size={17} /></Slot>
              <Url><b>127.0.0.1</b>:5500/index.html</Url>
              <Spring />
              <Slot w={32}><svg width="14" height="16" viewBox="0 0 14 16" fill="none" stroke="#5f6368" strokeWidth="1.200"><path d="M4.500 5.500H1.600v9h10.800v-9H9.500M7 10.500V1.500M4 4.200L7 1.200l3 3" /></svg></Slot>
              <Slot w={32}><MdStarBorder size={18} /></Slot>
            </AddressBar>
            <Slot w={32}><Svg><path d="M4.700 0h6.600L16 4.700v6.600L11.300 16H4.700L0 11.300V4.700z" fill="#f40d2d" /><text x="7.900" y="10.600" fontSize="7" fontWeight="800" textAnchor="middle" fill="#fff" fontFamily="Inter" letterSpacing="-.3">ABP</text></Svg></Slot>
            <Slot w={32}><Svg><rect x="1" y="1" width="14" height="14" rx="2.500" fill="#fb1d1d" /><rect x="3" y="5.500" width="10" height="5" rx="2" fill="#fff" /><path d="M4.600 8h7" stroke="#fb1d1d" strokeWidth="1.800" strokeDasharray="1.800 .600" /></Svg></Slot>
            <Slot w={32} color="#8379f7"><svg width="17" height="17" viewBox="0 0 24 24"><g transform="matrix(-1 0 0 1 24 0)"><MdBuild size={24} /></g></svg></Slot>
            <Slot w={32}><Svg><circle cx="8" cy="8" r="7.200" fill="#b9b9b9" /><path d="M3 9.500h8" stroke="#4a4a4a" strokeWidth="1.300" /><circle cx="12" cy="7.500" r="1.600" stroke="#4a4a4a" fill="#ddd" /></Svg></Slot>
            <Slot w={32}><Svg>{[0, 60, 120, 180, 240, 300].map((a) => <path key={a} d="M5.800 1.600q1.300.200 2.200 1.900q.900-1.700 2.200-1.900" stroke="#48608f" strokeWidth="2.600" transform={`rotate(${a} 8 8)`} />)}<circle cx="8" cy="8" r="1.800" fill="#fff" /></Svg></Slot>
            <Slot w={32}><Svg><rect x=".800" y="1" width="13.600" height="13" rx="2.500" fill="#4b4b4b" /><circle cx="5.500" cy="7" r="3" stroke="#a9a9a9" strokeWidth="1.200" /><path d="M9 3.500v7M12 3.500v4" stroke="#8d8d8d" strokeWidth="1.200" /><circle cx="11.500" cy="11.500" r="4" fill="#f6f6f6" /><path d="M10.300 9.500l3 2-3 2z" fill="#555" /></Svg></Slot>
            <Slot w={32}><MdExtension size={17} /></Slot>
            <Slot w={32}><Svg><path d="M14.500 7.500V1.700H2V14h6" stroke="#5f6368" strokeWidth="1.700" /><path d="M9.500 1.500h5.500v7H9.500z" fill="#5f6368" /><circle cx="12.700" cy="12" r="3.300" fill="#367cf7" stroke="#fff" strokeWidth=".5" /></Svg></Slot>
            <Slot w={32}><Avatar>A</Avatar></Slot>
            <Slot w={32}><MdMoreVert size={19} /></Slot>
          </Toolbar>

          <Bookmarks>
            {bookmarks.map(([icon, t, w]) => <Bookmark key={t} w={w}>{icon}{t}</Bookmark>)}
            <Spring />
            <Slot w={32}><svg width="9" height="9" viewBox="0 0 9 9" fill="none" stroke="#55595e" strokeWidth="1.400"><path d="M1 1.500l3 3-3 3M5 1.500l3 3-3 3" /></svg></Slot>
          </Bookmarks>

          <Page>
            <Card>
              <Title>Age Calculator</Title>
              <Fields>
                <Field>Date<Input $filled defaultValue="03" /></Field>
                <Field>Month<Input placeholder="mm" /></Field>
                <Field>Year<Input $filled defaultValue="1997" /></Field>
              </Fields>
              <Submit>Submit</Submit>
              <Message>please fill all required fields</Message>
            </Card>
          </Page>
        </BrowserWindow>

        <DockArea>
          <Dock>
            {dockApps.map((app, i) => (
              <DockCell key={i} $on={app.on}><Svg s={28} v={28}>{app.art}</Svg></DockCell>
            ))}
            <DockDivider />
            {thumbs.map((t, i) => (
              <DockCell key={i}>
                <svg width="30" height="28" viewBox="0 -3 30 28" fill="none">{t.art}<MiniBadge kind={t.kind} /></svg>
              </DockCell>
            ))}
            <DockCell>
              <Svg s={28} v={28}><path d="M3 2h22l-3 24c-3 2-13 2-16 0z" fill="#d1cfca" /><path d="M7 5l2 20M12 5l1 21M17 5l-1 21M22 5l-3 20" stroke="#e4e3df" strokeWidth="1.500" /><ellipse cx="14" cy="2.500" rx="11.300" ry="3" fill="#61645f" stroke="#e8e8e4" strokeWidth="1.300" /><path d="M6 3l3-4 4 3 4-3.500 4 4.500-4 2H9z" fill="#d5d4cf" /></Svg>
            </DockCell>
          </Dock>
        </DockArea>
        <Cursor width="13" height="20" viewBox="0 0 13 20"><path d="M1.500 1.500v14l3.300-3.100 2.300 5.300 2.500-1.100-2.200-5.100h4.500z" fill="#000" stroke="#fff" strokeWidth="1" /></Cursor>
      </Desktop>
    </>
  );
}
